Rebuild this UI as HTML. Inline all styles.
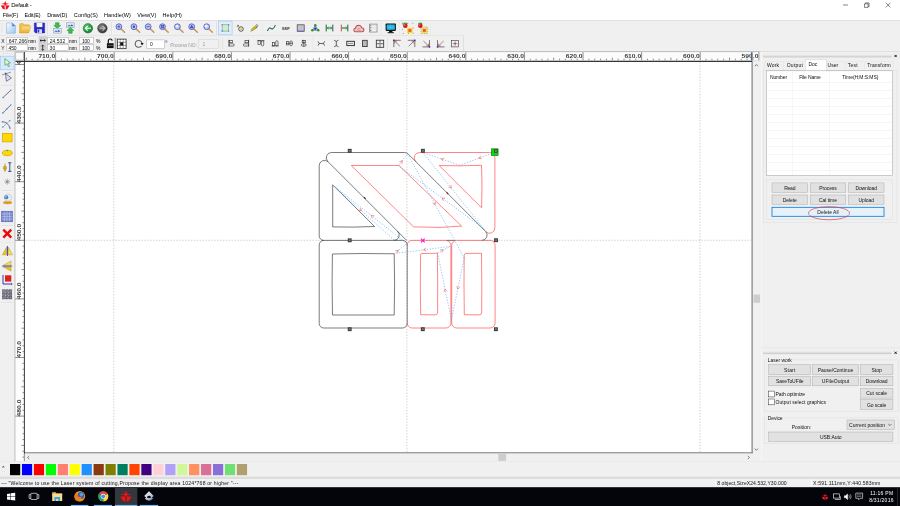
<!DOCTYPE html>
<html><head><meta charset="utf-8"><title>Default -</title>
<style>
*{margin:0;padding:0;box-sizing:border-box}
html,body{width:900px;height:506px;overflow:hidden;background:#f0f0f0}
body{position:relative;font-family:"Liberation Sans","DejaVu Sans",sans-serif;font-size:5px;color:#000;line-height:1}
.t{position:absolute;white-space:nowrap}
#s{position:absolute;left:0;top:0;will-change:transform}
#tx{position:absolute;left:0;top:0;width:900px;height:506px;will-change:transform}

</style></head><body>
<svg id="s" width="900" height="506" viewBox="0 0 900 506" font-family="Liberation Sans, DejaVu Sans, sans-serif">
<rect x="0" y="0" width="900" height="20.2" fill="#fff"/>
<rect x="0" y="20" width="900" height="0.7" fill="#cccccc"/>
<g stroke="#333" stroke-width="0.6" fill="none"><path d="M843 5h5"/><path d="M864.500 3.800h3.600v3.600h-3.600z M865.500 3.800v-0.900h3.600v3.600h-1"/><path d="M885.800 2.800l4.600 4.600M890.400 2.800l-4.600 4.600"/></g>
<path d="M0 -5.2l1.100 3 4 .7-4 .8-1.100 2-1.100-2-4-.8 4-.7zM-5.600 .7l4.800-.4 .3 5.200-2.300-.4zM5.600 .7l-4.800-.4-.3 5.200 2.300-.4z" fill="#f01018" transform="translate(5.2,5) scale(0.8)"/>
<rect x="0" y="20.7" width="900" height="30.6" fill="#f0f0f0"/>
<rect x="0" y="51" width="900" height="0.7" fill="#cdcdcd"/>
<rect x="1.7" y="23.5" width="0.6" height="0.6" fill="#b4b4b4"/>
<rect x="1.7" y="25.5" width="0.6" height="0.6" fill="#b4b4b4"/>
<rect x="1.7" y="27.5" width="0.6" height="0.6" fill="#b4b4b4"/>
<rect x="1.7" y="29.5" width="0.6" height="0.6" fill="#b4b4b4"/>
<rect x="1.7" y="31.5" width="0.6" height="0.6" fill="#b4b4b4"/>
<defs><linearGradient id="gd" x1="0" y1="0" x2="1" y2="1"><stop offset="0" stop-color="#fdfeff"/><stop offset="1" stop-color="#9cc4f0"/></linearGradient><linearGradient id="gf" x1="0" y1="0" x2="0" y2="1"><stop offset="0" stop-color="#fbe28a"/><stop offset="1" stop-color="#e9a92c"/></linearGradient><radialGradient id="gg" cx="0.4" cy="0.35" r="0.7"><stop offset="0" stop-color="#58c870"/><stop offset="1" stop-color="#0a7a2a"/></radialGradient><radialGradient id="gk" cx="0.4" cy="0.35" r="0.7"><stop offset="0" stop-color="#8a8a8a"/><stop offset="1" stop-color="#2c2c2c"/></radialGradient></defs>
<path d="M6.600 22.900h5.600l3.200 3.200v7.200H6.600z" fill="url(#gd)" stroke="#7aa6dc" stroke-width="0.5"/>
<path d="M12.200 22.900v3.200h3.200z" fill="#4a86d8" stroke="#5a8cd0" stroke-width="0.4"/>
<path d="M19.600 32.900V24.400q0-.8.800-.8h2.800l1 1.200h4.400q.8 0 .8.800v1.200" fill="#f0c050" stroke="#d9a030" stroke-width="0.5"/>
<path d="M19.600 33l1.800-6.300q.2-.6.900-.6h8q.6 0 .4.600l-1.800 5.800q-.2.500-.8.500z" fill="url(#gf)" stroke="#e0a020" stroke-width="0.5"/>
<path d="M34.300 22.900h10.400v10.100H35.600l-1.300-1.300z" fill="#2a2ac8" stroke="#1c1ca8" stroke-width="0.4"/>
<rect x="36.6" y="22.9" width="5.8" height="4.2" fill="#f4f4fa"/>
<rect x="37" y="29.3" width="5" height="3.7" fill="#d8d8e8"/>
<rect x="37.6" y="29.8" width="1.6" height="2.7" fill="#2a2ac8"/>
<rect x="47.4" y="22" width="0.45" height="12.6" fill="#c9c9c9"/>
<rect x="47.85" y="22" width="0.4" height="12.6" fill="#fbfbfb"/>
<path d="M55.500 22.700h3.500v2.700h1.700l-3.450 3.100-3.450-3.100h1.700z" fill="#38c048" stroke="#0a7a20" stroke-width="0.4"/>
<rect x="53.3" y="28.4" width="8" height="4.7" fill="#dce8f4" stroke="#8098b8" stroke-width="0.5"/>
<path d="M54.300 31.800l1.700-1.500 1.300.9 1.500-1.400 1.600 2z" fill="#3a6aa8" stroke="none" stroke-width="0"/>
<rect x="66.4" y="22.8" width="8" height="4.7" fill="#dce8f4" stroke="#8098b8" stroke-width="0.5"/>
<path d="M67.400 26.300l1.700-1.500 1.300.9 1.500-1.400 1.600 2z" fill="#3a6aa8" stroke="none" stroke-width="0"/>
<path d="M68.650 33.300h3.500v-2.700h1.700l-3.450-3.100-3.450 3.100h1.700z" fill="#38c048" stroke="#0a7a20" stroke-width="0.4"/>
<rect x="79.3" y="22" width="0.45" height="12.6" fill="#c9c9c9"/>
<rect x="79.75" y="22" width="0.4" height="12.6" fill="#fbfbfb"/>
<circle cx="87.9" cy="28.300" r="4.800" fill="url(#gg)" stroke="#0a6a20" stroke-width="0.4"/>
<path d="M91 28.300h-5.400M87.700 26l-2.400 2.300 2.400 2.300" fill="none" stroke="#fff" stroke-width="1.1"/>
<circle cx="102.4" cy="28.300" r="4.800" fill="url(#gk)" stroke="#222" stroke-width="0.4"/>
<path d="M99.300 28.300h5.400M102.600 26l2.400 2.300-2.400 2.300" fill="none" stroke="#bdbdbd" stroke-width="1.1"/>
<rect x="111.4" y="22" width="0.45" height="12.6" fill="#c9c9c9"/>
<rect x="111.85" y="22" width="0.4" height="12.6" fill="#fbfbfb"/>
<path d="M120.9 28.7L124.6 32.3" fill="none" stroke="#c8964a" stroke-width="1.5" stroke-linecap="round"/>
<circle cx="118.9" cy="26.7" r="2.9" fill="#b4ccf4" stroke="#4c4cb8" stroke-width="0.8"/>
<path d="M117.4 26.7h3M118.9 25.2v3" fill="none" stroke="#3838b0" stroke-width="0.7"/>
<path d="M135.9 28.7L139.6 32.3" fill="none" stroke="#c8964a" stroke-width="1.5" stroke-linecap="round"/>
<circle cx="133.9" cy="26.7" r="2.9" fill="#b4ccf4" stroke="#4c4cb8" stroke-width="0.8"/>
<rect x="132.9" y="25.7" width="2" height="2" fill="#3838b0"/>
<path d="M150.2 28.7L153.9 32.3" fill="none" stroke="#c8964a" stroke-width="1.5" stroke-linecap="round"/>
<circle cx="148.2" cy="26.7" r="2.9" fill="#b4ccf4" stroke="#4c4cb8" stroke-width="0.8"/>
<path d="M146.7 26.7h3" fill="none" stroke="#3838b0" stroke-width="0.8"/>
<path d="M164.5 28.7L168.2 32.3" fill="none" stroke="#c8964a" stroke-width="1.5" stroke-linecap="round"/>
<circle cx="162.5" cy="26.7" r="2.9" fill="#b4ccf4" stroke="#4c4cb8" stroke-width="0.8"/>
<rect x="161.2" y="25.4" width="2.6" height="2.6" fill="#7080d0" stroke="#3838b0" stroke-width="0.5"/>
<path d="M179.4 28.7L183.1 32.3" fill="none" stroke="#c8964a" stroke-width="1.5" stroke-linecap="round"/>
<circle cx="177.4" cy="26.7" r="2.9" fill="#b4ccf4" stroke="#4c4cb8" stroke-width="0.8"/>
<circle cx="176.9" cy="26.2" r="1.2" fill="#eef4ff"/>
<path d="M193.7 28.7L197.4 32.3" fill="none" stroke="#c8964a" stroke-width="1.5" stroke-linecap="round"/>
<circle cx="191.7" cy="26.7" r="2.9" fill="#b4ccf4" stroke="#4c4cb8" stroke-width="0.8"/>
<path d="M191.7 25L193.2 28H190.2Z" fill="#5060c0" stroke="#3838b0" stroke-width="0.5"/>
<path d="M208.7 28.7L212.4 32.3" fill="none" stroke="#c8964a" stroke-width="1.5" stroke-linecap="round"/>
<circle cx="206.7" cy="26.7" r="2.9" fill="#b4ccf4" stroke="#4c4cb8" stroke-width="0.8"/>
<circle cx="206.1" cy="26.1" r="1.4" fill="#f4f8ff"/>
<rect x="216.5" y="22" width="0.45" height="12.6" fill="#c9c9c9"/>
<rect x="216.95" y="22" width="0.4" height="12.6" fill="#fbfbfb"/>
<rect x="218.4" y="21.1" width="13.7" height="13.7" fill="#e0effb" stroke="#9ccdf5" stroke-width="0.7"/>
<rect x="222.1" y="24.8" width="6.6" height="6.3" fill="#c4f4c4" stroke="#7878b8" stroke-width="0.5"/>
<rect x="221.6" y="24.3" width="1" height="1" fill="#e03030"/>
<rect x="228.2" y="24.3" width="1" height="1" fill="#3030e0"/>
<rect x="221.6" y="30.6" width="1" height="1" fill="#3030e0"/>
<rect x="228.2" y="30.6" width="1" height="1" fill="#e03030"/>
<circle cx="241" cy="29" r="2.300" fill="#f0f0e0" stroke="#222" stroke-width="0.7"/>
<circle cx="241" cy="29" r="0.800" fill="#c8a020"/>
<path d="M237 25.300l1.800 1M237.900 24.700v2.200M236.800 26.500l2.200-1.200" fill="none" stroke="#222" stroke-width="0.5"/>
<circle cx="237.700" cy="25.700" r="0.700" fill="#d8b020"/>
<path d="M250.800 31.300l1.300-2.800 3.600-2.800 1.300 1.300-3.300 3.100z" fill="#c8c020" stroke="#6a6a10" stroke-width="0.4"/>
<path d="M255.800 25.200q1.500-1.300 2 .2-.3 1.800-2.200 3.300" fill="none" stroke="#333" stroke-width="0.6"/>
<rect x="262.1" y="22" width="0.45" height="12.6" fill="#c9c9c9"/>
<rect x="262.55" y="22" width="0.4" height="12.6" fill="#fbfbfb"/>
<path d="M267.500 31q1.500-4.500 3.500-2.500t4.300-3.300" fill="none" stroke="#1a7a6a" stroke-width="1"/>
<path d="M267.500 31q1.500-4.500 3.500-2.500t4.300-3.300" fill="none" stroke="#103838" stroke-width="0.4"/>
<text x="286" y="29.700" text-anchor="middle" font-size="3.600" font-weight="bold" fill="#333" textLength="7.600" lengthAdjust="spacingAndGlyphs">BMP</text>
<rect x="297.2" y="24.8" width="7" height="6.4" fill="#c4c4c8" stroke="#404048" stroke-width="0.7"/>
<rect x="297.2" y="30.8" width="7" height="0.8" fill="#5a5ae0"/>
<path d="M315.300 25.300L312.300 30.300H318.300Z" fill="none" stroke="#3a3a8a" stroke-width="0.5"/>
<path d="M315.300 25.300V28.800M312.300 30.300L315.300 28.800L318.300 30.300" fill="none" stroke="#3a3a8a" stroke-width="0.4"/>
<circle cx="315.3" cy="25.3" r="1.200" fill="#18a018"/>
<circle cx="312.3" cy="30.3" r="1.200" fill="#18a018"/>
<circle cx="318.3" cy="30.3" r="1.200" fill="#18a018"/>
<circle cx="315.3" cy="28.6" r="1.200" fill="#2828d0"/>
<path d="M326.200 24.600v6.800M332.800 24.600v6.800" fill="none" stroke="#2a3a3a" stroke-width="0.9"/>
<path d="M326.600 28h6" fill="none" stroke="#18a040" stroke-width="1.3"/>
<path d="M328.600 26.600l-1.600 1.400 1.600 1.400M330.600 26.600l1.600 1.400-1.600 1.400" fill="none" stroke="#18a040" stroke-width="0.6"/>
<path d="M341.300 24.600v6.800" fill="none" stroke="#d83030" stroke-width="0.9"/>
<path d="M347.800 24.600v6.800" fill="none" stroke="#2a3a3a" stroke-width="0.9"/>
<path d="M342 28h5.400" fill="none" stroke="#18a040" stroke-width="1.3"/>
<path d="M345.500 26.500l1.700 1.500-1.700 1.500" fill="none" stroke="#18a040" stroke-width="0.6"/>
<path d="M355.500 31.800q-1.800-.2-1.700-2 .2-1.500 1.700-1.600.3-2.800 3-3 2.600.1 3.100 2.600 2.200.1 2.300 2.100-.1 1.800-2 1.900z" fill="#d8d0d0" stroke="#d84848" stroke-width="1.1"/>
<path d="M357.300 30.300l1.500-2.300 1.500 2.300z" fill="#e8e0e0" stroke="#c05050" stroke-width="0.4"/>
<rect x="369.4" y="24.1" width="7.6" height="7.9" fill="#fafafa" stroke="#7a7a7a" stroke-width="0.7"/>
<rect x="370.2" y="25.2" width="1.1" height="1" fill="#3050d0"/>
<rect x="370.2" y="26.9" width="1.1" height="1" fill="#d03030"/>
<rect x="370.2" y="28.6" width="1.1" height="1" fill="#30a030"/>
<rect x="370.2" y="30.1" width="1.1" height="1" fill="#3050d0"/>
<path d="M372 25.700h4M372 27.400h4M372 29.100h4" fill="none" stroke="#b0b0b0" stroke-width="0.4"/>
<rect x="380.9" y="22" width="0.45" height="12.6" fill="#c9c9c9"/>
<rect x="381.35" y="22" width="0.4" height="12.6" fill="#fbfbfb"/>
<rect x="385.6" y="23.5" width="10.3" height="7.4" fill="#101010" rx="0.8"/>
<rect x="386.7" y="24.5" width="8.1" height="5.3" fill="#20b4e8"/>
<path d="M390.200 24.500v5.300M386.700 27.200h8.100" fill="none" stroke="#70d4f8" stroke-width="0.4"/>
<path d="M389.300 30.900h2.900l.7 1.600h-4.300z" fill="#101010" stroke="none" stroke-width="0"/>
<rect x="387.6" y="32.3" width="6.3" height="0.9" fill="#101010"/>
<rect x="399" y="22" width="0.45" height="12.6" fill="#c9c9c9"/>
<rect x="399.45" y="22" width="0.4" height="12.6" fill="#fbfbfb"/>
<circle cx="405.3" cy="25.700" r="2.300" fill="#d81818"/>
<circle cx="404.7" cy="25.100" r="0.800" fill="#ff7070"/>
<path d="M403.3 23.700q2-1.400 4 0" fill="none" stroke="#109010" stroke-width="1"/>
<rect x="407" y="27.6" width="5.7" height="5.6" fill="#f8e020"/>
<rect x="408.4" y="29" width="2.9" height="2.9" fill="#f05060"/>
<circle cx="420.3" cy="25.700" r="2.300" fill="#d81818"/>
<circle cx="419.7" cy="25.100" r="0.800" fill="#ff7070"/>
<path d="M418.3 23.700q2-1.400 4 0" fill="none" stroke="#109010" stroke-width="1"/>
<rect x="421.5" y="27.6" width="5.7" height="5.6" fill="#f8e020"/>
<rect x="422.9" y="29" width="2.9" height="2.9" fill="#f05060"/>
<path d="M402.400 23.200H413.200V33.400H402.400Z" fill="none" stroke="#222" stroke-width="0.6" stroke-dasharray="0.7 4.4"/>
<path d="M421 27.100H427.700V33.600H421Z" fill="none" stroke="#222" stroke-width="0.5" stroke-dasharray="0.6 1.200"/>
<rect x="430" y="22" width="0.45" height="12.6" fill="#c9c9c9"/>
<rect x="430.45" y="22" width="0.4" height="12.6" fill="#fbfbfb"/>
<rect x="0" y="35.4" width="463.3" height="0.5" fill="#dadada"/>
<rect x="463" y="35.4" width="0.5" height="16" fill="#d0d0d0"/>
<rect x="6.8" y="37.4" width="20.6" height="6" fill="#fff" stroke="#a8a8a8" stroke-width="0.5"/>
<rect x="6.8" y="44.7" width="20.6" height="6" fill="#fff" stroke="#a8a8a8" stroke-width="0.5"/>
<rect x="38.6" y="36.2" width="8.1" height="15" fill="#cfcfcf"/>
<path d="M40 40.500h5.400" fill="none" stroke="#111" stroke-width="0.8"/>
<path d="M41.300 39.400l-1.300 1.100 1.300 1.100M44.100 39.400l1.300 1.100-1.300 1.100" fill="none" stroke="#111" stroke-width="0.6"/>
<path d="M42.700 45v5.400" fill="none" stroke="#111" stroke-width="0.8"/>
<path d="M41.600 46.300l1.100-1.300 1.100 1.300M41.600 49.200l1.100 1.300 1.100-1.300" fill="none" stroke="#111" stroke-width="0.6"/>
<rect x="47.7" y="37.4" width="20.5" height="6" fill="#fff" stroke="#a8a8a8" stroke-width="0.5"/>
<rect x="47.7" y="44.7" width="20.5" height="6" fill="#fff" stroke="#a8a8a8" stroke-width="0.5"/>
<rect x="79.6" y="37.4" width="13.7" height="6" fill="#fff" stroke="#a8a8a8" stroke-width="0.5"/>
<rect x="79.6" y="44.7" width="13.7" height="6" fill="#fff" stroke="#a8a8a8" stroke-width="0.5"/>
<path d="M108.300 43.300v-2.300q0-2 1.900-2t1.900 1.700" fill="none" stroke="#111" stroke-width="1.2"/>
<rect x="106.9" y="43.2" width="6.7" height="4.9" fill="#111"/>
<rect x="107.6" y="45" width="5.3" height="0.6" fill="#888"/>
<rect x="114.6" y="37.8" width="1.7" height="11.5" fill="#a8a8a8"/>
<rect x="117.3" y="39.1" width="8.8" height="9.6" fill="#fff" stroke="#111" stroke-width="0.7"/>
<path d="M120.200 39.100v9.600M123.200 39.100v9.600M117.300 42.300h8.800M117.300 45.500h8.800" fill="none" stroke="#111" stroke-width="0.6" stroke-dasharray="1 0.6"/>
<rect x="120.2" y="42.3" width="3" height="3.2" fill="#111"/>
<rect x="129.2" y="37.5" width="0.45" height="12.5" fill="#c9c9c9"/>
<rect x="129.65" y="37.5" width="0.4" height="12.5" fill="#fbfbfb"/>
<circle cx="138.600" cy="43.900" r="3.500" fill="none" stroke="#111" stroke-width="0.7"/>
<path d="M140.900 43l2.600 0-1.300 2.200z" fill="#111" stroke="none" stroke-width="0"/>
<rect x="140.3" y="44.5" width="3.6" height="1.5" fill="#f0f0f0"/>
<path d="M140.700 43l2.800 0-1.400 2.300z" fill="#111" stroke="none" stroke-width="0"/>
<rect x="146.8" y="39.9" width="17.8" height="8.7" fill="#fff" stroke="#a8a8a8" stroke-width="0.5"/>
<circle cx="166.300" cy="41.500" r="0.900" fill="none" stroke="#3a5a9a" stroke-width="0.5"/>
<rect x="198.8" y="39.6" width="19.6" height="8.7" fill="#f0f0f0" stroke="#cfcfcf" stroke-width="0.5"/>
<rect x="220.1" y="37.5" width="0.45" height="12.5" fill="#c9c9c9"/>
<rect x="220.55" y="37.5" width="0.4" height="12.5" fill="#fbfbfb"/>
<rect x="222.5" y="38.5" width="0.6" height="0.6" fill="#b4b4b4"/>
<rect x="222.5" y="40.5" width="0.6" height="0.6" fill="#b4b4b4"/>
<rect x="222.5" y="42.5" width="0.6" height="0.6" fill="#b4b4b4"/>
<rect x="222.5" y="44.5" width="0.6" height="0.6" fill="#b4b4b4"/>
<rect x="222.5" y="46.5" width="0.6" height="0.6" fill="#b4b4b4"/>
<rect x="222.5" y="48.5" width="0.6" height="0.6" fill="#b4b4b4"/>
<path d="M229 39.8v7" fill="none" stroke="#2a2a2a" stroke-width="0.7"/>
<rect x="229" y="40.4" width="3.6" height="2.3" fill="none" stroke="#2a2a2a" stroke-width="0.6"/>
<rect x="229" y="43.8" width="5.2" height="2.3" fill="none" stroke="#2a2a2a" stroke-width="0.6" rx="1.1"/>
<path d="M248.6 39.8v7" fill="none" stroke="#2a2a2a" stroke-width="0.7"/>
<rect x="245" y="40.4" width="3.6" height="2.3" fill="none" stroke="#2a2a2a" stroke-width="0.6"/>
<rect x="243.4" y="43.8" width="5.2" height="2.3" fill="none" stroke="#2a2a2a" stroke-width="0.6" rx="1.1"/>
<path d="M257.4 40.7h7" fill="none" stroke="#2a2a2a" stroke-width="0.7"/>
<rect x="258" y="40.7" width="2.3" height="3.6" fill="none" stroke="#2a2a2a" stroke-width="0.6"/>
<rect x="261.4" y="40.7" width="2.3" height="5.2" fill="none" stroke="#2a2a2a" stroke-width="0.6" rx="1.1"/>
<path d="M271.7 45.9h7" fill="none" stroke="#2a2a2a" stroke-width="0.7"/>
<rect x="272.3" y="42.3" width="2.3" height="3.6" fill="none" stroke="#2a2a2a" stroke-width="0.6"/>
<rect x="275.7" y="40.7" width="2.3" height="5.2" fill="none" stroke="#2a2a2a" stroke-width="0.6" rx="1.1"/>
<path d="M286 43.3h7" fill="none" stroke="#2a2a2a" stroke-width="0.6"/>
<rect x="286.6" y="41.7" width="2.3" height="3.2" fill="none" stroke="#2a2a2a" stroke-width="0.6"/>
<rect x="290" y="40.9" width="2.3" height="4.8" fill="none" stroke="#2a2a2a" stroke-width="0.6" rx="1.1"/>
<path d="M303.8 39.8v7" fill="none" stroke="#2a2a2a" stroke-width="0.6"/>
<rect x="302.2" y="40.4" width="3.2" height="2.3" fill="none" stroke="#2a2a2a" stroke-width="0.6"/>
<rect x="301.4" y="43.8" width="4.8" height="2.3" fill="none" stroke="#2a2a2a" stroke-width="0.6" rx="1.1"/>
<rect x="312.9" y="37.5" width="0.45" height="12.5" fill="#c9c9c9"/>
<rect x="313.35" y="37.5" width="0.4" height="12.5" fill="#fbfbfb"/>
<path d="M318 41.3q2.300 2.200 0 4.400M324.6 41.3q-2.300 2.200 0 4.400M319.1 43.5h4.400" fill="none" stroke="#2a2a2a" stroke-width="0.7"/>
<path d="M334.1 40.2q2.200 2.300 4.400 0M334.1 46.8q2.200-2.300 4.400 0M336.3 41.3v4.400" fill="none" stroke="#2a2a2a" stroke-width="0.7"/>
<rect x="346.8" y="41.3" width="7.6" height="4.3" fill="#e8e8e8" stroke="#2a2a2a" stroke-width="0.9"/>
<path d="M348 43.500h5.200" fill="none" stroke="#2a2a2a" stroke-width="0.4"/>
<rect x="362.6" y="40.3" width="4.6" height="6.3" fill="#b8b8b8" stroke="#2a2a2a" stroke-width="0.8"/>
<rect x="376.3" y="40.2" width="7.4" height="7.1" fill="none" stroke="#2a2a2a" stroke-width="0.8"/>
<path d="M380 40.200v7.100M376.300 43.700h7.400" fill="none" stroke="#2a2a2a" stroke-width="0.5"/>
<path d="M378.600 41.900h2.800v3.600h-2.800z" fill="#f0f0f0" stroke="none" stroke-width="0"/>
<path d="M380 41.300v4.800M377.500 43.700h5" fill="none" stroke="#2a2a2a" stroke-width="0.5"/>
<rect x="387.7" y="37.5" width="0.45" height="12.5" fill="#c9c9c9"/>
<rect x="388.15" y="37.5" width="0.4" height="12.5" fill="#fbfbfb"/>
<path d="M393.8 40.3H400.8M393.8 40.3V47.1" fill="none" stroke="#2a2a2a" stroke-width="0.6"/>
<path d="M399.9 46.2L394.8 41.3" fill="none" stroke="#2a2a2a" stroke-width="0.5"/>
<path d="M394.7 43.5L394.7 41.2L397 41.2" fill="none" stroke="#e02828" stroke-width="0.7"/>
<rect x="393.1" y="39.6" width="1.4" height="1.4" fill="#1818e0"/>
<path d="M414.8 40.3H407.8M414.8 40.3V47.1" fill="none" stroke="#2a2a2a" stroke-width="0.6"/>
<path d="M408.7 46.2L413.8 41.3" fill="none" stroke="#2a2a2a" stroke-width="0.5"/>
<path d="M413.9 43.5L413.9 41.2L411.6 41.2" fill="none" stroke="#e02828" stroke-width="0.7"/>
<rect x="414.1" y="39.6" width="1.4" height="1.4" fill="#1818e0"/>
<path d="M429.5 46.9H422.5M429.5 46.9V40.1" fill="none" stroke="#2a2a2a" stroke-width="0.6"/>
<path d="M423.4 41L428.5 45.9" fill="none" stroke="#2a2a2a" stroke-width="0.5"/>
<path d="M428.6 43.7L428.6 46L426.3 46" fill="none" stroke="#e02828" stroke-width="0.7"/>
<rect x="428.8" y="46.2" width="1.4" height="1.4" fill="#1818e0"/>
<path d="M437.5 46.9H444.5M437.5 46.9V40.1" fill="none" stroke="#2a2a2a" stroke-width="0.6"/>
<path d="M443.6 41L438.5 45.9" fill="none" stroke="#2a2a2a" stroke-width="0.5"/>
<path d="M438.4 43.7L438.4 46L440.7 46" fill="none" stroke="#e02828" stroke-width="0.7"/>
<rect x="436.8" y="46.2" width="1.4" height="1.4" fill="#1818e0"/>
<rect x="451.6" y="40.3" width="7" height="6.6" fill="none" stroke="#3a3a3a" stroke-width="0.6"/>
<path d="M455.100 41.300v4.600M452.600 43.600h5" fill="none" stroke="#2a2a2a" stroke-width="0.4"/>
<rect x="454.4" y="42.9" width="1.4" height="1.4" fill="#d02060"/>
<rect x="0" y="51.7" width="14.4" height="410" fill="#f0f0f0"/>
<rect x="14.5" y="51.7" width="1.1" height="410" fill="#b8b8b8"/>
<rect x="15.6" y="51.7" width="8.4" height="410" fill="#fdfdfd"/>
<rect x="15.5" y="52" width="744" height="8.3" fill="#fbfbfb"/>
<rect x="15.8" y="52.2" width="7.8" height="7.8" fill="#fbfbfb" stroke="#999" stroke-width="0.5"/>
<rect x="15.5" y="51.3" width="744" height="0.8" fill="#b8b8b8"/>
<rect x="24.4" y="61.3" width="727.7" height="391.6" fill="#fff"/>
<path d="M752.1 61.3L752.1 453.4" fill="none" stroke="#808080" stroke-width="1.2"/>
<path d="M24 452.9L752.7 452.9" fill="none" stroke="#808080" stroke-width="1.1"/>
<path d="M24.4 52L24.4 461.3" fill="none" stroke="#3a3a3a" stroke-width="1"/>
<path d="M15.5 61.3L752.2 61.3" fill="none" stroke="#353535" stroke-width="1.2"/>
<path d="M752.2 61.3L759.5 61.3" fill="none" stroke="#c4c4c4" stroke-width="0.8"/>
<path d="M26.3 57.6V60.2 M32.16 58.7V60.2 M38.02 58.7V60.2 M43.88 58.7V60.2 M49.74 58.7V60.2 M55.6 52.2V60.2 M61.46 58.7V60.2 M67.32 58.7V60.2 M73.18 58.7V60.2 M79.04 58.7V60.2 M84.9 57.6V60.2 M90.76 58.7V60.2 M96.62 58.7V60.2 M102.48 58.7V60.2 M108.34 58.7V60.2 M114.2 52.2V60.2 M120.06 58.7V60.2 M125.92 58.7V60.2 M131.78 58.7V60.2 M137.64 58.7V60.2 M143.5 57.6V60.2 M149.36 58.7V60.2 M155.22 58.7V60.2 M161.08 58.7V60.2 M166.94 58.7V60.2 M172.8 52.2V60.2 M178.66 58.7V60.2 M184.52 58.7V60.2 M190.38 58.7V60.2 M196.24 58.7V60.2 M202.1 57.6V60.2 M207.96 58.7V60.2 M213.82 58.7V60.2 M219.68 58.7V60.2 M225.54 58.7V60.2 M231.4 52.2V60.2 M237.26 58.7V60.2 M243.12 58.7V60.2 M248.98 58.7V60.2 M254.84 58.7V60.2 M260.7 57.6V60.2 M266.56 58.7V60.2 M272.42 58.7V60.2 M278.28 58.7V60.2 M284.14 58.7V60.2 M290 52.2V60.2 M295.86 58.7V60.2 M301.72 58.7V60.2 M307.58 58.7V60.2 M313.44 58.7V60.2 M319.3 57.6V60.2 M325.16 58.7V60.2 M331.02 58.7V60.2 M336.88 58.7V60.2 M342.74 58.7V60.2 M348.6 52.2V60.2 M354.46 58.7V60.2 M360.32 58.7V60.2 M366.18 58.7V60.2 M372.04 58.7V60.2 M377.9 57.6V60.2 M383.76 58.7V60.2 M389.62 58.7V60.2 M395.48 58.7V60.2 M401.34 58.7V60.2 M407.2 52.2V60.2 M413.06 58.7V60.2 M418.92 58.7V60.2 M424.78 58.7V60.2 M430.64 58.7V60.2 M436.5 57.6V60.2 M442.36 58.7V60.2 M448.22 58.7V60.2 M454.08 58.7V60.2 M459.94 58.7V60.2 M465.8 52.2V60.2 M471.66 58.7V60.2 M477.52 58.7V60.2 M483.38 58.7V60.2 M489.24 58.7V60.2 M495.1 57.6V60.2 M500.96 58.7V60.2 M506.82 58.7V60.2 M512.68 58.7V60.2 M518.54 58.7V60.2 M524.4 52.2V60.2 M530.26 58.7V60.2 M536.12 58.7V60.2 M541.98 58.7V60.2 M547.84 58.7V60.2 M553.7 57.6V60.2 M559.56 58.7V60.2 M565.42 58.7V60.2 M571.28 58.7V60.2 M577.14 58.7V60.2 M583 52.2V60.2 M588.86 58.7V60.2 M594.72 58.7V60.2 M600.58 58.7V60.2 M606.44 58.7V60.2 M612.3 57.6V60.2 M618.16 58.7V60.2 M624.02 58.7V60.2 M629.88 58.7V60.2 M635.74 58.7V60.2 M641.6 52.2V60.2 M647.46 58.7V60.2 M653.32 58.7V60.2 M659.18 58.7V60.2 M665.04 58.7V60.2 M670.9 57.6V60.2 M676.76 58.7V60.2 M682.62 58.7V60.2 M688.48 58.7V60.2 M694.34 58.7V60.2 M700.2 52.2V60.2 M706.06 58.7V60.2 M711.92 58.7V60.2 M717.78 58.7V60.2 M723.64 58.7V60.2 M729.5 57.6V60.2 M735.36 58.7V60.2 M741.22 58.7V60.2 M747.08 58.7V60.2 M752.94 58.7V60.2" fill="none" stroke="#333" stroke-width="0.55"/>
<text x="38.4" y="57.7" font-size="5.9" font-weight="bold" fill="#3c3c3c" textLength="16.8" lengthAdjust="spacingAndGlyphs">710.0</text>
<text x="97" y="57.7" font-size="5.9" font-weight="bold" fill="#3c3c3c" textLength="16.8" lengthAdjust="spacingAndGlyphs">700.0</text>
<text x="155.6" y="57.7" font-size="5.9" font-weight="bold" fill="#3c3c3c" textLength="16.8" lengthAdjust="spacingAndGlyphs">690.0</text>
<text x="214.2" y="57.7" font-size="5.9" font-weight="bold" fill="#3c3c3c" textLength="16.8" lengthAdjust="spacingAndGlyphs">680.0</text>
<text x="272.8" y="57.7" font-size="5.9" font-weight="bold" fill="#3c3c3c" textLength="16.8" lengthAdjust="spacingAndGlyphs">670.0</text>
<text x="331.4" y="57.7" font-size="5.9" font-weight="bold" fill="#3c3c3c" textLength="16.8" lengthAdjust="spacingAndGlyphs">660.0</text>
<text x="390" y="57.7" font-size="5.9" font-weight="bold" fill="#3c3c3c" textLength="16.8" lengthAdjust="spacingAndGlyphs">650.0</text>
<text x="448.6" y="57.7" font-size="5.9" font-weight="bold" fill="#3c3c3c" textLength="16.8" lengthAdjust="spacingAndGlyphs">640.0</text>
<text x="507.2" y="57.7" font-size="5.9" font-weight="bold" fill="#3c3c3c" textLength="16.8" lengthAdjust="spacingAndGlyphs">630.0</text>
<text x="565.8" y="57.7" font-size="5.9" font-weight="bold" fill="#3c3c3c" textLength="16.8" lengthAdjust="spacingAndGlyphs">620.0</text>
<text x="624.4" y="57.7" font-size="5.9" font-weight="bold" fill="#3c3c3c" textLength="16.8" lengthAdjust="spacingAndGlyphs">610.0</text>
<text x="683" y="57.7" font-size="5.9" font-weight="bold" fill="#3c3c3c" textLength="16.8" lengthAdjust="spacingAndGlyphs">600.0</text>
<text x="741.6" y="57.7" font-size="5.9" font-weight="bold" fill="#3c3c3c" textLength="16.8" lengthAdjust="spacingAndGlyphs">590.0</text>
<path d="M15.2 64.5H24 M22.5 70.36H24 M22.5 76.22H24 M22.5 82.08H24 M22.5 87.94H24 M21.4 93.8H24 M22.5 99.66H24 M22.5 105.52H24 M22.5 111.38H24 M22.5 117.24H24 M15.2 123.1H24 M22.5 128.96H24 M22.5 134.82H24 M22.5 140.68H24 M22.5 146.54H24 M21.4 152.4H24 M22.5 158.26H24 M22.5 164.12H24 M22.5 169.98H24 M22.5 175.84H24 M15.2 181.7H24 M22.5 187.56H24 M22.5 193.42H24 M22.5 199.28H24 M22.5 205.14H24 M21.4 211H24 M22.5 216.86H24 M22.5 222.72H24 M22.5 228.58H24 M22.5 234.44H24 M15.2 240.3H24 M22.5 246.16H24 M22.5 252.02H24 M22.5 257.88H24 M22.5 263.74H24 M21.4 269.6H24 M22.5 275.46H24 M22.5 281.32H24 M22.5 287.18H24 M22.5 293.04H24 M15.2 298.9H24 M22.5 304.76H24 M22.5 310.62H24 M22.5 316.48H24 M22.5 322.34H24 M21.4 328.2H24 M22.5 334.06H24 M22.5 339.92H24 M22.5 345.78H24 M22.5 351.64H24 M15.2 357.5H24 M22.5 363.36H24 M22.5 369.22H24 M22.5 375.08H24 M22.5 380.94H24 M21.4 386.8H24 M22.5 392.66H24 M22.5 398.52H24 M22.5 404.38H24 M22.5 410.24H24 M15.2 416.1H24 M22.5 421.96H24 M22.5 427.82H24 M22.5 433.68H24 M22.5 439.54H24 M21.4 445.4H24 M22.5 451.26H24 M22.5 457.12H24" fill="none" stroke="#333" stroke-width="0.55"/>
<clipPath id="cv"><rect x="15" y="61.9" width="9" height="399"/></clipPath><g clip-path="url(#cv)">
<text transform="translate(21,64.8) rotate(-90)" font-size="5.9" font-weight="bold" fill="#3c3c3c" textLength="16.8" lengthAdjust="spacingAndGlyphs">420.0</text>
<text transform="translate(21,123.4) rotate(-90)" font-size="5.9" font-weight="bold" fill="#3c3c3c" textLength="16.8" lengthAdjust="spacingAndGlyphs">430.0</text>
<text transform="translate(21,182) rotate(-90)" font-size="5.9" font-weight="bold" fill="#3c3c3c" textLength="16.8" lengthAdjust="spacingAndGlyphs">440.0</text>
<text transform="translate(21,240.6) rotate(-90)" font-size="5.9" font-weight="bold" fill="#3c3c3c" textLength="16.8" lengthAdjust="spacingAndGlyphs">450.0</text>
<text transform="translate(21,299.2) rotate(-90)" font-size="5.9" font-weight="bold" fill="#3c3c3c" textLength="16.8" lengthAdjust="spacingAndGlyphs">460.0</text>
<text transform="translate(21,357.8) rotate(-90)" font-size="5.9" font-weight="bold" fill="#3c3c3c" textLength="16.8" lengthAdjust="spacingAndGlyphs">470.0</text>
<text transform="translate(21,416.4) rotate(-90)" font-size="5.9" font-weight="bold" fill="#3c3c3c" textLength="16.8" lengthAdjust="spacingAndGlyphs">480.0</text>
</g>
<path d="M113.8 62V452" fill="none" stroke="#b4b4a0" stroke-width="0.6" stroke-dasharray="1.4 1.5"/>
<path d="M406.9 62V452" fill="none" stroke="#b4b4a0" stroke-width="0.6" stroke-dasharray="1.4 1.5"/>
<path d="M700 62V452" fill="none" stroke="#b4b4a0" stroke-width="0.6" stroke-dasharray="1.4 1.5"/>
<path d="M25.5 240.3H752" fill="none" stroke="#b4b4a0" stroke-width="0.6" stroke-dasharray="1.4 1.5"/>
<path d="M758.9 52L758.9 60.4" fill="none" stroke="#555" stroke-width="0.6"/>
<path d="M751.8 52.3L751.8 60.6" fill="none" stroke="#a8c4dc" stroke-width="2.2"/>
<path d="M751.8 52.3L751.8 60.6" fill="none" stroke="#28323c" stroke-width="0.9"/>
<rect x="753.4" y="61.2" width="7.4" height="392" fill="#f0f0f0"/>
<rect x="24.5" y="453.6" width="736" height="7.8" fill="#f0f0f0"/>
<rect x="498.3" y="453.9" width="7.8" height="7" fill="#cdcdcd"/>
<rect x="753.5" y="294.5" width="6.5" height="8.3" fill="#cdcdcd"/>
<g stroke="#505050" stroke-width="0.7" fill="none"><path d="M754.800 66.200l1.600-1.700 1.600 1.700"/><path d="M754.800 448.600l1.600 1.700 1.600-1.700"/><path d="M29.300 455.900l-1.700 1.600 1.700 1.600"/><path d="M747.800 455.900l1.700 1.600-1.700 1.600"/></g>
<rect x="3" y="53" width="0.6" height="0.6" fill="#b4b4b4"/>
<rect x="5" y="53" width="0.6" height="0.6" fill="#b4b4b4"/>
<rect x="7" y="53" width="0.6" height="0.6" fill="#b4b4b4"/>
<rect x="9" y="53" width="0.6" height="0.6" fill="#b4b4b4"/>
<rect x="11" y="53" width="0.6" height="0.6" fill="#b4b4b4"/>
<rect x="0.3" y="56.2" width="13.8" height="13.5" fill="#d8eafa" stroke="#9ccdf5" stroke-width="0.7"/>
<path d="M4.800 58.600l5.600 4.300-2.400.4 1.500 2.800-1.200.6-1.400-2.900-1.900 1.500z" fill="#e8f8e8" stroke="#2c8a3c" stroke-width="0.6"/>
<path d="M5.500 73.600L6.300 81.300L11.500 78Z" fill="#dcdcf0" stroke="#3a3a5a" stroke-width="0.6"/>
<path d="M1.900 74.900L11 72.200" fill="none" stroke="#3a3a5a" stroke-width="0.5"/>
<rect x="4.9" y="72.7" width="1.3" height="1.3" fill="#3050d0"/>
<rect x="1.5" y="85.4" width="11.5" height="0.45" fill="#c9c9c9"/>
<rect x="1.5" y="85.85" width="11.5" height="0.4" fill="#fbfbfb"/>
<path d="M3 97.600l7.800-7.400" fill="none" stroke="#3a3a6a" stroke-width="0.7"/>
<rect x="2.4" y="97" width="1.2" height="1.2" fill="#2090e0"/>
<rect x="10.2" y="89.6" width="1.2" height="1.2" fill="#2090e0"/>
<path d="M2.800 113l8-8" fill="none" stroke="#3a3a6a" stroke-width="0.7"/>
<rect x="2.2" y="112.4" width="1.2" height="1.2" fill="#2090e0"/>
<rect x="6.2" y="108.4" width="1.2" height="1.2" fill="#2090e0"/>
<rect x="10.2" y="104.4" width="1.2" height="1.2" fill="#2090e0"/>
<path d="M2.400 121.800q5.500 0 7.600 6.400" fill="none" stroke="#3a3a6a" stroke-width="0.7"/>
<path d="M2.800 127l7-6.400" fill="none" stroke="#6a6a8a" stroke-width="0.5"/>
<rect x="1.8" y="121.2" width="1.2" height="1.2" fill="#2090e0"/>
<rect x="9.4" y="127.6" width="1.2" height="1.2" fill="#2090e0"/>
<rect x="9.2" y="120" width="1.2" height="1.2" fill="#2090e0"/>
<rect x="2.2" y="126.4" width="1.2" height="1.2" fill="#2090e0"/>
<rect x="2.5" y="133.3" width="9.6" height="8.6" fill="#ffd800" stroke="#c89800" stroke-width="0.6"/>
<ellipse cx="7.300" cy="153" rx="5" ry="2.700" fill="#ffd800" stroke="#c89800" stroke-width="0.6"/>
<rect x="6.7" y="149.9" width="1.2" height="1.2" fill="#2090e0"/>
<path d="M9.800 162.800v8.600M8.200 162.800h3.200M8.200 171.400h3.200" fill="none" stroke="#204080" stroke-width="0.9"/>
<path d="M5 163.600v2M4 166.200h2l.4 2.600H3.600zM4.400 168.800v2.600M5.600 168.800v2.600" fill="#e0b020" stroke="#b88a10" stroke-width="0.8"/>
<path d="M7.300 178.800v5.800M4.400 181.700h5.800M5.200 179.600l4.200 4.200M9.400 179.600l-4.200 4.200" fill="none" stroke="#6a6a7a" stroke-width="0.5"/>
<circle cx="7.300" cy="181.700" r="0.900" fill="#8a8a9a"/>
<rect x="1.5" y="190.4" width="11.5" height="0.45" fill="#c9c9c9"/>
<rect x="1.5" y="190.85" width="11.5" height="0.4" fill="#fbfbfb"/>
<ellipse cx="7.600" cy="202.600" rx="4.600" ry="1.700" fill="#e09a20"/>
<circle cx="7.900" cy="197.600" r="3.700" fill="#e8ecf4" stroke="#b0b8c8" stroke-width="0.5"/>
<circle cx="6.300" cy="197.300" r="2" fill="#3a80c8"/>
<circle cx="5.900" cy="196.900" r="0.800" fill="#a8d0f0"/>
<rect x="1.7" y="211.3" width="10.6" height="10.4" fill="#7a8ad0" stroke="#4a5ab0" stroke-width="0.7"/>
<path d="M4.300 211.300v10.400M6.900 211.300v10.400M9.600 211.300v10.400M1.700 213.900h10.600M1.700 216.500h10.600M1.700 219.100h10.600" fill="none" stroke="#c8d0f0" stroke-width="0.5"/>
<rect x="1.5" y="225.5" width="11.5" height="0.45" fill="#c9c9c9"/>
<rect x="1.5" y="225.95" width="11.5" height="0.4" fill="#fbfbfb"/>
<path d="M3.300 229.600l8 8M11.300 229.600l-8 8" fill="none" stroke="#f00808" stroke-width="2.4"/>
<rect x="1.5" y="242.1" width="11.5" height="0.45" fill="#c9c9c9"/>
<rect x="1.5" y="242.55" width="11.5" height="0.4" fill="#fbfbfb"/>
<path d="M6.600 247.200v7.600l-4.200 0z" fill="#f0c800" stroke="#a08000" stroke-width="0.4"/>
<path d="M8.300 247.200v7.600l4.200 0z" fill="#f8e060" stroke="#a08000" stroke-width="0.4"/>
<path d="M7.450 246v10" fill="none" stroke="#2020d0" stroke-width="0.8"/>
<path d="M3.400 265.300h7.600l0-4.200z" fill="#f8e060" stroke="#a08000" stroke-width="0.4"/>
<path d="M3.400 266.900h7.600l0 4.200z" fill="#f0c800" stroke="#a08000" stroke-width="0.4"/>
<path d="M2.200 266.100h10" fill="none" stroke="#2020d0" stroke-width="0.8"/>
<rect x="5" y="275.3" width="6.3" height="6.3" fill="#e02020"/>
<path d="M3 275v9h9" fill="none" stroke="#2020a0" stroke-width="0.9"/>
<path d="M11 283l1.300 1-1.300 1" fill="none" stroke="#2020a0" stroke-width="0.5"/>
<rect x="2.7" y="289.8" width="2.5" height="2.5" fill="#8a8a9a" stroke="#3a3a4a" stroke-width="0.5"/>
<rect x="2.7" y="293.1" width="2.5" height="2.5" fill="#8a8a9a" stroke="#3a3a4a" stroke-width="0.5"/>
<rect x="2.7" y="296.4" width="2.5" height="2.5" fill="#8a8a9a" stroke="#3a3a4a" stroke-width="0.5"/>
<rect x="6" y="289.8" width="2.5" height="2.5" fill="#8a8a9a" stroke="#3a3a4a" stroke-width="0.5"/>
<rect x="6" y="293.1" width="2.5" height="2.5" fill="#8a8a9a" stroke="#3a3a4a" stroke-width="0.5"/>
<rect x="6" y="296.4" width="2.5" height="2.5" fill="#8a8a9a" stroke="#3a3a4a" stroke-width="0.5"/>
<rect x="9.3" y="289.8" width="2.5" height="2.5" fill="#8a8a9a" stroke="#3a3a4a" stroke-width="0.5"/>
<rect x="9.3" y="293.1" width="2.5" height="2.5" fill="#8a8a9a" stroke="#3a3a4a" stroke-width="0.5"/>
<rect x="9.3" y="296.4" width="2.5" height="2.5" fill="#8a8a9a" stroke="#3a3a4a" stroke-width="0.5"/>
<rect x="1.5" y="302.4" width="11.5" height="0.45" fill="#c9c9c9"/>
<rect x="1.5" y="302.85" width="11.5" height="0.4" fill="#fbfbfb"/>
<path d="M415.75 161.55A5.3 5.3 0 0 1 419.5 152.5L489.6 152.5A5.3 5.3 0 0 1 494.9 157.8L494.9 227.9A5.3 5.3 0 0 1 485.85 231.65" fill="none" stroke="#ff3a3a" stroke-width="0.62"/>
<path d="M323.7 240.4A4.5 4.5 0 0 1 319.2 235.9L319.2 165.7A5.3 5.3 0 0 1 328.25 161.95L397.65 231.35A5.3 5.3 0 0 1 393.9 240.4" fill="none" stroke="#2a2a2a" stroke-width="0.62"/>
<path d="M327.85 161.55A5.3 5.3 0 0 1 331.6 152.5L404.5 152.5A5.3 5.3 0 0 1 408.25 154.05L485.55 231.35A5.3 5.3 0 0 1 481.8 240.4M397.4 231.2L406.5 240.3M446.7 240.4H455.4" fill="none" stroke="#2a2a2a" stroke-width="0.62"/>
<path d="M332.7 184.9L374.6 226.5L353 227.1L332.7 226.9Z" fill="none" stroke="#2a2a2a" stroke-width="0.62"/>
<path d="M319.2 245A4.6 4.6 0 0 1 323.8 240.4L402.6 240.4A4.6 4.6 0 0 1 407.2 245L407.2 323.4A4.6 4.6 0 0 1 402.6 328L323.8 328A4.6 4.6 0 0 1 319.2 323.4Z" fill="none" stroke="#2a2a2a" stroke-width="0.62"/>
<path d="M332.4 254L362 253.5L394.2 253.8L394.6 284L394.2 315L332.5 315L332.1 285Z" fill="none" stroke="#2a2a2a" stroke-width="0.62"/>
<path d="M364 197.2l1.6 1.6" fill="none" stroke="#2a2a2a" stroke-width="1.1"/>
<path d="M351.3 165.5L399 165.5L461.6 226.1L440 227.4L413.6 226.9Z" fill="none" stroke="#ff3a3a" stroke-width="0.62"/>
<path d="M439.2 165.5L460 165.8L481.5 165.3L482 186L481.6 207.8Z" fill="none" stroke="#ff3a3a" stroke-width="0.62"/>
<path d="M407.2 245.4A5 5 0 0 1 412.2 240.4L445.9 240.4A5 5 0 0 1 450.9 245.4L450.9 323A5 5 0 0 1 445.9 328L412.2 328A5 5 0 0 1 407.2 323" fill="none" stroke="#ff3a3a" stroke-width="0.62"/>
<path d="M451.7 245.4A5 5 0 0 1 456.7 240.4L490.1 240.4A5 5 0 0 1 495.1 245.4L495.1 323A5 5 0 0 1 490.1 328L456.7 328A5 5 0 0 1 451.7 323Z" fill="none" stroke="#ff3a3a" stroke-width="0.62"/>
<path d="M421.6 253.6L437.4 253.2L437.7 285L437.6 313Q437.4 314.8 435 314.9L420.7 314.7L420.3 285L420.6 254.6Q420.7 253.6 421.6 253.6Z" fill="none" stroke="#ff3a3a" stroke-width="0.62"/>
<path d="M465.6 253.5L474 253.3L481.5 253.3L481.8 285L481.7 313Q481.5 314.8 479 314.9L464.3 314.7L464 285L464.2 255.5Q464.4 253.6 465.6 253.5Z" fill="none" stroke="#ff3a3a" stroke-width="0.62"/>
<path d="M446.6 192.4l1.600 1.600" fill="none" stroke="#7a2020" stroke-width="1.1"/>
<path d="M494.5 152.5L459.5 165.3M459.5 165.3L422.9 152.5M422.9 152.5L484.7 229.8M484 229L398.5 165.8M398.5 165.8L407.4 153.6M407.4 153.6L464.2 258M464.2 258L451.4 320M451.4 320L437.6 252.8M437.6 252.8L450.3 246.4M450.3 246.4L394.5 253.5M394.5 253.5L406.8 243.6M406.8 243.6L332.7 184.9M332.7 184.9L394 240" fill="none" stroke="#55a8ff" stroke-width="0.62" stroke-dasharray="1.3 1.5"/>
<path d="M480.74 155.88L478.75 158.26L481.81 158.79" fill="none" stroke="#ff3a3a" stroke-width="0.55"/>
<path d="M444.25 158.32L441.2 158.9L443.23 161.25" fill="none" stroke="#ff3a3a" stroke-width="0.55"/>
<path d="M448.44 186.93L451.33 188.06L450.86 184.99" fill="none" stroke="#ff3a3a" stroke-width="0.55"/>
<path d="M445.19 198.38L442.11 198.03L443.34 200.88" fill="none" stroke="#ff3a3a" stroke-width="0.55"/>
<path d="M401.91 163.76L402.24 160.68L399.4 161.93" fill="none" stroke="#ff3a3a" stroke-width="0.55"/>
<path d="M432.58 203.14L435.23 204.76L435.31 201.65" fill="none" stroke="#ff3a3a" stroke-width="0.55"/>
<path d="M456.82 286.05L457.8 289L459.86 286.68" fill="none" stroke="#ff3a3a" stroke-width="0.55"/>
<path d="M447.11 291.41L445.05 289.09L444.07 292.03" fill="none" stroke="#ff3a3a" stroke-width="0.55"/>
<path d="M441.61 252.52L443.31 249.92L440.22 249.74" fill="none" stroke="#ff3a3a" stroke-width="0.55"/>
<path d="M425.99 247.93L423.52 249.81L426.38 251.01" fill="none" stroke="#ff3a3a" stroke-width="0.55"/>
<path d="M397.31 253.23L398.44 250.33L395.37 250.81" fill="none" stroke="#ff3a3a" stroke-width="0.55"/>
<path d="M374.3 215.88L371.23 215.42L372.38 218.31" fill="none" stroke="#ff3a3a" stroke-width="0.55"/>
<path d="M358.47 210.15L361.51 210.8L360.55 207.84" fill="none" stroke="#ff3a3a" stroke-width="0.55"/>
<rect x="347.75" y="148.85" width="3.9" height="3.9" fill="#3c3c3c"/>
<rect x="348.8" y="149.9" width="1.8" height="1.8" fill="#7a7a7a"/>
<rect x="420.95" y="148.85" width="3.9" height="3.9" fill="#3c3c3c"/>
<rect x="422" y="149.9" width="1.8" height="1.8" fill="#7a7a7a"/>
<rect x="347.75" y="238.35" width="3.9" height="3.9" fill="#3c3c3c"/>
<rect x="348.8" y="239.4" width="1.8" height="1.8" fill="#7a7a7a"/>
<rect x="494.05" y="238.25" width="3.9" height="3.9" fill="#3c3c3c"/>
<rect x="495.1" y="239.3" width="1.8" height="1.8" fill="#7a7a7a"/>
<rect x="347.75" y="327.25" width="3.9" height="3.9" fill="#3c3c3c"/>
<rect x="348.8" y="328.3" width="1.8" height="1.8" fill="#7a7a7a"/>
<rect x="420.85" y="327.25" width="3.9" height="3.9" fill="#3c3c3c"/>
<rect x="421.9" y="328.3" width="1.8" height="1.8" fill="#7a7a7a"/>
<rect x="493.95" y="327.25" width="3.9" height="3.9" fill="#3c3c3c"/>
<rect x="495" y="328.3" width="1.8" height="1.8" fill="#7a7a7a"/>
<rect x="491.3" y="148.8" width="6.8" height="6.8" fill="#00e000" stroke="#1c6a1c" stroke-width="0.6"/>
<rect x="494.1" y="149.3" width="3.5" height="3.5" fill="#3c3c3c"/>
<rect x="495" y="150.2" width="1.7" height="1.7" fill="#8a8a8a"/>
<path d="M420.900 238.600l3.800 3.800M424.700 238.600l-3.800 3.800" fill="none" stroke="#ff10e0" stroke-width="1.1"/>
<rect x="761" y="51.7" width="139" height="409.8" fill="#f0f0f0"/>
<rect x="761" y="461.3" width="139" height="0.5" fill="#dcdcdc"/>
<rect x="761.3" y="52" width="0.6" height="409" fill="#fafafa"/>
<rect x="763" y="54.9" width="128.6" height="2.3" fill="#d9d9d9"/>
<rect x="763" y="54.9" width="128.6" height="0.5" fill="#f8f8f8"/>
<rect x="763" y="56.8" width="128.6" height="0.5" fill="#c4c4c4"/>
<path d="M894.5 54.9l2.2 2.200M896.700 54.9l-2.200 2.200" fill="none" stroke="#111" stroke-width="0.95"/>
<rect x="763.7" y="70.4" width="133.3" height="152" fill="none" stroke="#dcdcdc" stroke-width="0.5"/>
<rect x="764.7" y="61.5" width="0.4" height="8.7" fill="#dedede"/>
<rect x="783.3" y="61.5" width="0.4" height="8.7" fill="#dedede"/>
<rect x="826.5" y="61.5" width="0.4" height="8.7" fill="#dedede"/>
<rect x="845" y="61.5" width="0.4" height="8.7" fill="#dedede"/>
<rect x="864" y="61.5" width="0.4" height="8.7" fill="#dedede"/>
<rect x="893.3" y="61.5" width="0.4" height="8.7" fill="#dedede"/>
<rect x="764.7" y="61.3" width="128.8" height="0.4" fill="#dedede"/>
<rect x="805.2" y="59.8" width="21.2" height="11.2" fill="#fff" stroke="#d0d0d0" stroke-width="0.5"/>
<rect x="805.5" y="70" width="20.6" height="1.4" fill="#fff"/>
<rect x="766.4" y="70.8" width="126" height="104.6" fill="#fff" stroke="#9a9da3" stroke-width="0.5"/>
<rect x="792.4" y="71.2" width="0.5" height="104" fill="#ececec"/>
<rect x="829.4" y="71.2" width="0.5" height="104" fill="#ececec"/>
<rect x="766.8" y="82.3" width="125.2" height="0.5" fill="#ececec"/>
<rect x="766.8" y="90.3" width="125.2" height="0.5" fill="#ececec"/>
<rect x="766.8" y="98.3" width="125.2" height="0.5" fill="#ececec"/>
<rect x="766.8" y="106.3" width="125.2" height="0.5" fill="#ececec"/>
<rect x="766.8" y="114.3" width="125.2" height="0.5" fill="#ececec"/>
<rect x="766.8" y="122.3" width="125.2" height="0.5" fill="#ececec"/>
<rect x="766.8" y="130.3" width="125.2" height="0.5" fill="#ececec"/>
<rect x="766.8" y="138.3" width="125.2" height="0.5" fill="#ececec"/>
<rect x="766.8" y="146.3" width="125.2" height="0.5" fill="#ececec"/>
<rect x="766.8" y="154.3" width="125.2" height="0.5" fill="#ececec"/>
<rect x="766.8" y="162.3" width="125.2" height="0.5" fill="#ececec"/>
<rect x="766.8" y="170.3" width="125.2" height="0.5" fill="#ececec"/>
<rect x="766.4" y="179.8" width="126" height="39.8" fill="none" stroke="#dcdcdc" stroke-width="0.5"/>
<rect x="772" y="182.9" width="35.6" height="9.4" fill="#e1e1e1" stroke="#adadad" stroke-width="0.5"/>
<rect x="772" y="195" width="35.6" height="9.4" fill="#e1e1e1" stroke="#adadad" stroke-width="0.5"/>
<rect x="810.2" y="182.9" width="35.6" height="9.4" fill="#e1e1e1" stroke="#adadad" stroke-width="0.5"/>
<rect x="810.2" y="195" width="35.6" height="9.4" fill="#e1e1e1" stroke="#adadad" stroke-width="0.5"/>
<rect x="848.4" y="182.9" width="35.6" height="9.4" fill="#e1e1e1" stroke="#adadad" stroke-width="0.5"/>
<rect x="848.4" y="195" width="35.6" height="9.4" fill="#e1e1e1" stroke="#adadad" stroke-width="0.5"/>
<rect x="772" y="207.3" width="112" height="9" fill="#e5f1fb" stroke="#0078d7" stroke-width="0.8"/>
<ellipse cx="829" cy="213.200" rx="20.500" ry="6.600" fill="none" stroke="#e04050" stroke-width="0.7"/>
<rect x="761.5" y="347.6" width="138.5" height="0.6" fill="#e2e2e2"/>
<rect x="763" y="351.7" width="128.6" height="2.3" fill="#d9d9d9"/>
<rect x="763" y="351.7" width="128.6" height="0.5" fill="#f8f8f8"/>
<rect x="763" y="353.6" width="128.6" height="0.5" fill="#c4c4c4"/>
<path d="M894.5 351.7l2.2 2.200M896.700 351.7l-2.200 2.200" fill="none" stroke="#111" stroke-width="0.95"/>
<rect x="764.6" y="359.9" width="133.6" height="51.3" fill="none" stroke="#dcdcdc" stroke-width="0.5"/>
<rect x="767" y="357" width="25.5" height="5.4" fill="#f0f0f0"/>
<rect x="768.7" y="364.6" width="42" height="9.9" fill="#e1e1e1" stroke="#adadad" stroke-width="0.5"/>
<rect x="812.3" y="364.6" width="46.3" height="9.9" fill="#e1e1e1" stroke="#adadad" stroke-width="0.5"/>
<rect x="860.4" y="364.6" width="32.5" height="9.9" fill="#e1e1e1" stroke="#adadad" stroke-width="0.5"/>
<rect x="768.7" y="376.2" width="42" height="9.6" fill="#e1e1e1" stroke="#adadad" stroke-width="0.5"/>
<rect x="812.3" y="376.2" width="46.3" height="9.6" fill="#e1e1e1" stroke="#adadad" stroke-width="0.5"/>
<rect x="860.4" y="376.2" width="32.5" height="9.6" fill="#e1e1e1" stroke="#adadad" stroke-width="0.5"/>
<rect x="860.4" y="388.5" width="32.5" height="9.6" fill="#e1e1e1" stroke="#adadad" stroke-width="0.5"/>
<rect x="860.4" y="399.7" width="32.5" height="9.6" fill="#e1e1e1" stroke="#adadad" stroke-width="0.5"/>
<rect x="768.6" y="391.1" width="5.8" height="5.8" fill="#fff" stroke="#333" stroke-width="0.5"/>
<rect x="768.6" y="399" width="5.8" height="5.8" fill="#fff" stroke="#333" stroke-width="0.5"/>
<rect x="764.6" y="417.9" width="133.6" height="25.8" fill="none" stroke="#dcdcdc" stroke-width="0.5"/>
<rect x="767" y="415" width="16.5" height="5.4" fill="#f0f0f0"/>
<rect x="847" y="420" width="47.5" height="9.6" fill="#e1e1e1" stroke="#adadad" stroke-width="0.5"/>
<path d="M888.200 424l1.600 1.600 1.600-1.600" fill="none" stroke="#333" stroke-width="0.6"/>
<rect x="768.7" y="432" width="124.2" height="9.6" fill="#e1e1e1" stroke="#adadad" stroke-width="0.5"/>
<rect x="0" y="461.5" width="761" height="16" fill="#f0f0f0"/>
<rect x="0" y="461.4" width="761" height="0.5" fill="#e4e4e4"/>
<rect x="761" y="461.8" width="139" height="16" fill="#f0f0f0"/>
<rect x="10" y="464" width="10.2" height="11.2" fill="#000000"/>
<rect x="21.94" y="464" width="10.2" height="11.2" fill="#0000ff"/>
<rect x="33.88" y="464" width="10.2" height="11.2" fill="#ff0000"/>
<rect x="45.82" y="464" width="10.2" height="11.2" fill="#00ff00"/>
<rect x="57.76" y="464" width="10.2" height="11.2" fill="#ff8070"/>
<rect x="69.7" y="464" width="10.2" height="11.2" fill="#ffff00"/>
<rect x="81.64" y="464" width="10.2" height="11.2" fill="#1e90ff"/>
<rect x="93.58" y="464" width="10.2" height="11.2" fill="#8b3a10"/>
<rect x="105.52" y="464" width="10.2" height="11.2" fill="#808000"/>
<rect x="117.46" y="464" width="10.2" height="11.2" fill="#008060"/>
<rect x="129.4" y="464" width="10.2" height="11.2" fill="#ff4500"/>
<rect x="141.34" y="464" width="10.2" height="11.2" fill="#400080"/>
<rect x="153.28" y="464" width="10.2" height="11.2" fill="#ffd0d8"/>
<rect x="165.22" y="464" width="10.2" height="11.2" fill="#b0a0f8"/>
<rect x="177.16" y="464" width="10.2" height="11.2" fill="#d0f898"/>
<rect x="189.1" y="464" width="10.2" height="11.2" fill="#ff9060"/>
<rect x="201.04" y="464" width="10.2" height="11.2" fill="#d87098"/>
<rect x="212.98" y="464" width="10.2" height="11.2" fill="#8870d8"/>
<rect x="224.92" y="464" width="10.2" height="11.2" fill="#70e070"/>
<rect x="236.86" y="464" width="10.2" height="11.2" fill="#b0a070"/>
<path d="M2.500 466l1.600 1.600M4.100 466l-1.600 1.600" fill="none" stroke="#222" stroke-width="0.6"/>
<rect x="2.4" y="471.6" width="1.8" height="3" fill="#fff" stroke="#ccc" stroke-width="0.3"/>
<rect x="0" y="476.6" width="900" height="11" fill="#f1f1f1"/>
<rect x="0" y="476.6" width="900" height="2.4" fill="#dddddd"/>
<rect x="715.4" y="479.2" width="0.6" height="8" fill="#fdfdfd"/>
<rect x="811.2" y="479.2" width="0.6" height="8" fill="#fdfdfd"/>
<rect x="0" y="487.2" width="900" height="18.9" fill="#03050a"/>
<rect x="114.9" y="487.9" width="22.4" height="18.2" fill="#34373b"/>
<rect x="70.9" y="504.9" width="17.5" height="1.1" fill="#76b9ed"/>
<rect x="93.8" y="504.9" width="18.3" height="1.1" fill="#76b9ed"/>
<rect x="114.9" y="504.9" width="22.4" height="1.1" fill="#76b9ed"/>
<rect x="139.7" y="504.9" width="18.5" height="1.1" fill="#76b9ed"/>
<defs><linearGradient id="ik" x1="0" y1="0" x2="1" y2="1"><stop offset="0" stop-color="#ffffff"/><stop offset="0.55" stop-color="#c8ccd4"/><stop offset="1" stop-color="#4a78b8"/></linearGradient><radialGradient id="fx" cx="0.5" cy="0.45" r="0.6"><stop offset="0.5" stop-color="#ffb000"/><stop offset="1" stop-color="#e05a10"/></radialGradient></defs>
<g fill="#fff"><path d="M7 493.900l3.400-.5v3h-3.400z M10.900 493.320l4.300-.62v3.700h-4.300z M7 496.900h3.400v3l-3.400-.5z M10.900 496.900h4.300v3.700l-4.300-.62z"/></g>
<g fill="none" stroke="#e8e8e8" stroke-width="0.7"><rect x="30.800" y="493.300" width="6.300" height="6.200" rx="0.5"/><path d="M30.800 494.600h-1.700v3.800h1.700M37.100 494.600h1.700v3.800h-1.700"/></g>
<g><path d="M52.200 492.200h3.400l.9 1h5.700v2H52.200z" fill="#e9bd55"/><rect x="52.200" y="494" width="10" height="7" fill="#f9dc8c"/><path d="M54.400 501v-3.900h5.600v3.900h-1.800v-2h-2v2z" fill="#35a8e8"/></g>
<g><circle cx="79.800" cy="496.300" r="5.400" fill="url(#fx)"/><circle cx="80.600" cy="495.600" r="3.500" fill="#2d62b8"/><circle cx="81.400" cy="494.600" r="1.700" fill="#5aa0e0"/><path d="M74.600 495c1.300-1.600 3-1.400 3.800-.3-.9.300-1 1.200-.3 1.800.9.700 2.400.7 3.400.1-.2 2.400-2 4.300-4.100 4.300-2 0-3.400-2.400-2.800-5.900z" fill="#f07818"/></g>
<g><path d="M103.2 496.3L98.61 493.65A5.3 5.3 0 0 1 107.79 493.65Z" fill="#de4a3c"/><path d="M103.2 496.3L107.79 493.65A5.3 5.3 0 0 1 103.2 501.6Z" fill="#fdd23e"/><path d="M103.2 496.3L103.2 501.6A5.3 5.3 0 0 1 98.61 493.65Z" fill="#1ea362"/><circle cx="103.2" cy="496.3" r="2.500" fill="#f4f4f4"/><circle cx="103.2" cy="496.3" r="1.900" fill="#4a8cf6"/></g>
<g fill="#fb0d10"><path d="M125.900 490.800l1.100 3 4 .7-4 .800-1.100 2-1.100-2-4-.8 4-.7z"/><path d="M120.300 496.700l4.800-.4.300 5.200-2.300-.4z"/><path d="M131.500 496.700l-4.800-.4-.3 5.200 2.300-.4z"/></g>
<g><path d="M149 491.200l4.800 4.700-1.900 1.700 1.200 1.100-2.400 1.600h-3.400l-2.400-1.600 1.200-1.100-1.900-1.700z" fill="url(#ik)"/><path d="M147.400 496.400q1.600-1.300 3.200 0 .9.900-.2 1.500h-2.800q-1.100-.6-.2-1.500z" fill="#0a0c10"/><path d="M147.600 499.600h2.800l-1.400 1.500z" fill="#9aa4b4"/></g>
<g fill="#ee1c25" transform="translate(822.4,493.400) scale(0.3)"><path d="M9 0l2.200 6 8 1.400-8 1.600-2.200 4-2.200-4-8-1.600 8-1.400z"/><path d="M-2.200 11.800l9.600-.8.600 10.400-4.600-.8z"/><path d="M20.200 11.800l-9.600-.8-.6 10.400 4.600-.8z"/></g>
<g fill="none" stroke="#fff" stroke-width="0.6"><rect x="833.400" y="493.900" width="6.200" height="4.200"/><path d="M834.800 499.500h5.600v-3.200"/></g>
<g fill="none" stroke="#fff" stroke-width="0.55"><path d="M844.400 495.800h1.300l1.800-1.700v5.400l-1.800-1.700h-1.300z" fill="#fff"/><path d="M848.700 495.200c.9.900.9 2.300 0 3.200M850 494.200c1.400 1.500 1.400 3.700 0 5.200"/></g>
<g fill="none" stroke="#fff" stroke-width="0.6"><path d="M855.800 493.100h6.800v5.200h-2.600l-1.300 1.400v-1.400h-2.900z"/><path d="M857 494.900h4.400M857 496.400h4.400" stroke-width="0.4"/></g>
<rect x="897.6" y="487.8" width="0.4" height="18.2" fill="#555"/>
</svg>
<div id="tx">
<div class="t" style="left:11.19px;top:2.06px;font-size:5.9px;color:#000;height:7.08px;line-height:7.08px;letter-spacing:-0.211px;">Default -</div>
<div class="t" style="left:2.77px;top:12px;font-size:5.5px;color:#000;height:6.6px;line-height:6.6px;letter-spacing:-0.069px;">File(F)</div>
<div class="t" style="left:24.44px;top:12px;font-size:5.5px;color:#000;height:6.6px;line-height:6.6px;letter-spacing:-0.116px;">Edit(E)</div>
<div class="t" style="left:47.17px;top:12px;font-size:5.5px;color:#000;height:6.6px;line-height:6.6px;letter-spacing:-0.067px;">Draw(D)</div>
<div class="t" style="left:73.84px;top:12px;font-size:5.5px;color:#000;height:6.6px;line-height:6.6px;letter-spacing:0.086px;">Config(S)</div>
<div class="t" style="left:104.04px;top:12px;font-size:5.5px;color:#000;height:6.6px;line-height:6.6px;letter-spacing:0.080px;">Handle(W)</div>
<div class="t" style="left:137.29px;top:12px;font-size:5.5px;color:#000;height:6.6px;line-height:6.6px;letter-spacing:-0.022px;">View(V)</div>
<div class="t" style="left:162.54px;top:12px;font-size:5.5px;color:#000;height:6.6px;line-height:6.6px;letter-spacing:0.079px;">Help(H)</div>
<div class="t" style="left:1.23px;top:37.8px;font-size:5px;color:#111;height:6px;line-height:6px;letter-spacing:-0.135px;">X</div>
<div class="t" style="left:1.23px;top:45px;font-size:5px;color:#111;height:6px;line-height:6px;letter-spacing:-0.135px;">Y</div>
<div class="t" style="left:8.64px;top:37.5px;font-size:5px;color:#111;height:6px;line-height:6px;letter-spacing:0.075px;width:18.6px;overflow:hidden;">647.266</div>
<div class="t" style="left:8.54px;top:44.8px;font-size:5px;color:#111;height:6px;line-height:6px;letter-spacing:-0.114px;">450</div>
<div class="t" style="left:28.14px;top:37.8px;font-size:5px;color:#111;height:6px;line-height:6px;letter-spacing:-0.515px;">mm</div>
<div class="t" style="left:28.14px;top:45px;font-size:5px;color:#111;height:6px;line-height:6px;letter-spacing:-0.515px;">mm</div>
<div class="t" style="left:49.63px;top:37.5px;font-size:5px;color:#111;height:6px;line-height:6px;letter-spacing:0.051px;">24.532</div>
<div class="t" style="left:49.61px;top:44.8px;font-size:5px;color:#111;height:6px;line-height:6px;letter-spacing:0.019px;">30</div>
<div class="t" style="left:69.04px;top:37.8px;font-size:5px;color:#111;height:6px;line-height:6px;letter-spacing:-0.515px;">mm</div>
<div class="t" style="left:69.04px;top:45px;font-size:5px;color:#111;height:6px;line-height:6px;letter-spacing:-0.515px;">mm</div>
<div class="t" style="left:81.88px;top:37.5px;font-size:5px;color:#111;height:6px;line-height:6px;letter-spacing:-0.247px;">100</div>
<div class="t" style="left:81.88px;top:44.8px;font-size:5px;color:#111;height:6px;line-height:6px;letter-spacing:-0.247px;">100</div>
<div class="t" style="left:96.03px;top:38px;font-size:5px;color:#111;height:6px;line-height:6px;letter-spacing:0.054px;">%</div>
<div class="t" style="left:96.03px;top:45.3px;font-size:5px;color:#111;height:6px;line-height:6px;letter-spacing:0.054px;">%</div>
<div class="t" style="left:150.01px;top:41.4px;font-size:5px;color:#111;height:6px;line-height:6px;letter-spacing:0.019px;">0</div>
<div class="t" style="left:170.21px;top:41.9px;font-size:5px;color:#a0a0a0;height:6px;line-height:6px;letter-spacing:-0.176px;">Process NO:</div>
<div class="t" style="left:202.41px;top:41.4px;font-size:5px;color:#9a9a9a;height:6px;line-height:6px;letter-spacing:-0.181px;">1</div>
<div class="t" style="left:767.05px;top:62px;font-size:5px;color:#111;height:6px;line-height:6px;letter-spacing:0.106px;">Work</div>
<div class="t" style="left:786.72px;top:62px;font-size:5px;color:#111;height:6px;line-height:6px;letter-spacing:0.248px;">Output</div>
<div class="t" style="left:808.42px;top:61.1px;font-size:5px;color:#111;height:6px;line-height:6px;letter-spacing:0.036px;">Doc</div>
<div class="t" style="left:827.62px;top:62px;font-size:5px;color:#111;height:6px;line-height:6px;letter-spacing:0.036px;">User</div>
<div class="t" style="left:847.63px;top:62px;font-size:5px;color:#111;height:6px;line-height:6px;letter-spacing:0.258px;">Test</div>
<div class="t" style="left:867.16px;top:62px;font-size:5px;color:#111;height:6px;line-height:6px;letter-spacing:0.123px;">Transform</div>
<div class="t" style="left:769.93px;top:73.8px;font-size:5px;color:#111;height:6px;line-height:6px;letter-spacing:-0.131px;">Number</div>
<div class="t" style="left:799.23px;top:73.8px;font-size:5px;color:#111;height:6px;line-height:6px;letter-spacing:-0.143px;">File Name</div>
<div class="t" style="left:842.26px;top:73.8px;font-size:5px;color:#111;height:6px;line-height:6px;letter-spacing:-0.074px;">Time(H:M:S:MS)</div>
<div class="t" style="left:784.18px;top:184.7px;font-size:5px;color:#111;height:6px;line-height:6px;letter-spacing:-0.238px;">Read</div>
<div class="t" style="left:782.76px;top:196.8px;font-size:5px;color:#111;height:6px;line-height:6px;letter-spacing:-0.076px;">Delete</div>
<div class="t" style="left:819.21px;top:184.7px;font-size:5px;color:#111;height:6px;line-height:6px;letter-spacing:-0.080px;">Process</div>
<div class="t" style="left:818.98px;top:196.8px;font-size:5px;color:#111;height:6px;line-height:6px;letter-spacing:-0.042px;">Cal time</div>
<div class="t" style="left:855.4px;top:184.7px;font-size:5px;color:#111;height:6px;line-height:6px;letter-spacing:-0.092px;">Download</div>
<div class="t" style="left:858.42px;top:196.8px;font-size:5px;color:#111;height:6px;line-height:6px;letter-spacing:-0.057px;">Upload</div>
<div class="t" style="left:817.27px;top:208.9px;font-size:5px;color:#111;height:6px;line-height:6px;letter-spacing:0.038px;">Delete All</div>
<div class="t" style="left:767.78px;top:356.8px;font-size:5px;color:#111;height:6px;line-height:6px;letter-spacing:-0.045px;">Laser work</div>
<div class="t" style="left:784.04px;top:366.65px;font-size:5px;color:#111;height:6px;line-height:6px;letter-spacing:0.188px;">Start</div>
<div class="t" style="left:817.7px;top:366.65px;font-size:5px;color:#111;height:6px;line-height:6px;letter-spacing:-0.006px;">Pause/Continue</div>
<div class="t" style="left:871.43px;top:366.65px;font-size:5px;color:#111;height:6px;line-height:6px;letter-spacing:0.054px;">Stop</div>
<div class="t" style="left:775.91px;top:378.1px;font-size:5px;color:#111;height:6px;line-height:6px;letter-spacing:-0.077px;">SaveToUFile</div>
<div class="t" style="left:821.74px;top:378.1px;font-size:5px;color:#111;height:6px;line-height:6px;letter-spacing:0.075px;">UFileOutput</div>
<div class="t" style="left:865.85px;top:378.1px;font-size:5px;color:#111;height:6px;line-height:6px;letter-spacing:-0.092px;">Download</div>
<div class="t" style="left:866.16px;top:390.4px;font-size:5px;color:#111;height:6px;line-height:6px;letter-spacing:0.018px;">Cut scale</div>
<div class="t" style="left:866.89px;top:401.6px;font-size:5px;color:#111;height:6px;line-height:6px;letter-spacing:-0.029px;">Go scale</div>
<div class="t" style="left:775.57px;top:391px;font-size:5px;color:#111;height:6px;line-height:6px;letter-spacing:-0.061px;">Path optimize</div>
<div class="t" style="left:775.62px;top:399px;font-size:5px;color:#111;height:6px;line-height:6px;letter-spacing:0.034px;">Output select graphics</div>
<div class="t" style="left:767.76px;top:414.8px;font-size:5px;color:#111;height:6px;line-height:6px;letter-spacing:-0.081px;">Device</div>
<div class="t" style="left:791.72px;top:423.8px;font-size:5px;color:#111;height:6px;line-height:6px;letter-spacing:0.036px;">Position:</div>
<div class="t" style="left:849.02px;top:421.8px;font-size:5px;color:#111;height:6px;line-height:6px;letter-spacing:0.044px;">Current position</div>
<div class="t" style="left:820.02px;top:433.9px;font-size:5px;color:#111;height:6px;line-height:6px;letter-spacing:-0.057px;">USB:Auto</div>
<div class="t" style="left:1.3px;top:480.14px;font-size:5.1px;color:#111;height:6.12px;line-height:6.12px;letter-spacing:0.202px;">--- "Welcome to use the Laser system of cutting,Propose the display area 1024*768 or higher "---</div>
<div class="t" style="left:717.22px;top:480.14px;font-size:5.1px;color:#111;height:6.12px;line-height:6.12px;letter-spacing:0.031px;">8 object,SizeX24.532,Y30.000</div>
<div class="t" style="left:813.08px;top:480.14px;font-size:5.1px;color:#111;height:6.12px;line-height:6.12px;letter-spacing:0.157px;">X:591.111mm,Y:440.583mm</div>
<div class="t" style="left:870.14px;top:489.6px;font-size:5px;color:#fff;height:6px;line-height:6px;letter-spacing:0.271px;">11:16 PM</div>
<div class="t" style="left:869.13px;top:497.2px;font-size:5px;color:#fff;height:6px;line-height:6px;letter-spacing:0.262px;">8/31/2016</div>
</div>
</body></html>
